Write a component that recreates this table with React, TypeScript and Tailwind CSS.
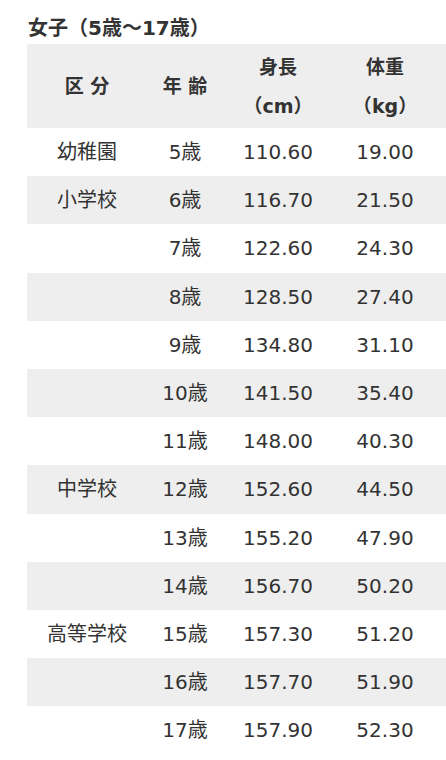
const rows = [
  { kubun: "幼稚園", age: "5歳", h: "110.60", w: "19.00" },
  { kubun: "小学校", age: "6歳", h: "116.70", w: "21.50" },
  { kubun: "", age: "7歳", h: "122.60", w: "24.30" },
  { kubun: "", age: "8歳", h: "128.50", w: "27.40" },
  { kubun: "", age: "9歳", h: "134.80", w: "31.10" },
  { kubun: "", age: "10歳", h: "141.50", w: "35.40" },
  { kubun: "", age: "11歳", h: "148.00", w: "40.30" },
  { kubun: "中学校", age: "12歳", h: "152.60", w: "44.50" },
  { kubun: "", age: "13歳", h: "155.20", w: "47.90" },
  { kubun: "", age: "14歳", h: "156.70", w: "50.20" },
  { kubun: "高等学校", age: "15歳", h: "157.30", w: "51.20" },
  { kubun: "", age: "16歳", h: "157.70", w: "51.90" },
  { kubun: "", age: "17歳", h: "157.90", w: "52.30" },
];

// fullwidth punctuation from the CJK font, not DejaVu
function J({ children }: { children: React.ReactNode }) {
  return <span className="font-['Noto_Sans_CJK_JP']">{children}</span>;
}

export default function App() {
  return (
    <div
      className="min-h-screen bg-white pl-[27px] text-[#333333]"
      style={{ fontFamily: '"DejaVu Sans", "Noto Sans CJK JP", sans-serif' }}
    >
      <h2 className="h-[44px] overflow-hidden pl-px pt-[16px] text-[20px] font-bold leading-[22px]">
        女子<J>（</J>5歳<J>～</J>17歳<J>）</J>
      </h2>

      <div className="w-full">
        {/* header */}
        <div className="grid h-[84px] grid-cols-[120px_76px_110px_104px] items-center overflow-hidden bg-[#eeeeee] text-[19px] font-bold">
          <div className="text-center">区 分</div>
          <div className="text-center">年 齢</div>
          <div className="text-center leading-[37px]">
            <div className="h-[37px]">身長</div>
            <div className="h-[37px]">
              <J>（</J>cm<J>）</J>
            </div>
          </div>
          <div className="text-center leading-[37px]">
            <div className="h-[37px]">体重</div>
            <div className="h-[37px]">
              <J>（</J>kg<J>）</J>
            </div>
          </div>
        </div>

        {rows.map((r, i) => (
          <div
            key={r.age}
            className={
              "grid h-[48.2px] grid-cols-[120px_76px_110px_104px] items-center text-[20px] " +
              (i % 2 === 1 ? "bg-[#eeeeee]" : "bg-white")
            }
          >
            <div className="text-center">{r.kubun}</div>
            <div className="text-center">{r.age}</div>
            <div className="text-center">{r.h}</div>
            <div className="text-center">{r.w}</div>
          </div>
        ))}
      </div>
    </div>
  );
}
